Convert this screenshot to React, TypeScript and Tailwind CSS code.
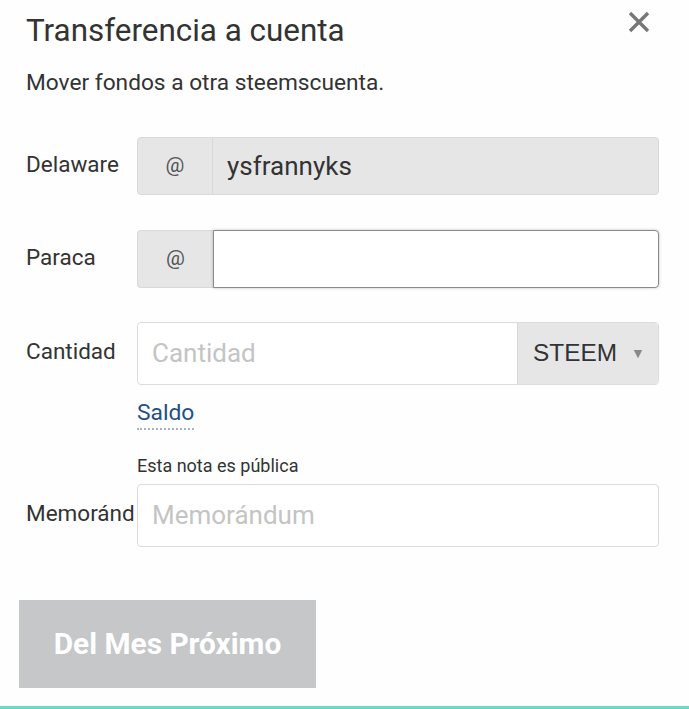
const font = { fontFamily: "Roboto, 'Noto Sans', sans-serif" };

function Row({
  label,
  children,
  className = "",
}: {
  label: string;
  children: React.ReactNode;
  className?: string;
}) {
  return (
    <div className={`flex items-center ${className}`}>
      <div className="-mt-[5px] mr-[2px] w-[109px] shrink-0 overflow-hidden whitespace-nowrap text-[22.5px] leading-[28px] text-[#333]">
        {label}
      </div>
      <div className="w-[522px]">{children}</div>
    </div>
  );
}

export default function App() {
  return (
    <div
      className="relative flex h-[709px] w-[689px] flex-col bg-[#fefefe] text-[#333]"
      style={font}
    >
      <div className="flex items-start justify-between pl-[26px] pr-[39px] pt-[12px]">
        <h1 className="text-[31.4px] leading-[38px] text-[#333]">Transferencia a cuenta</h1>
        <svg width="22" height="22" viewBox="0 0 22 22" className="-mt-[1px]">
          <path d="M2 2L20 20M20 2L2 20" stroke="#777" strokeWidth="3.4" strokeLinecap="butt" />
        </svg>
      </div>
      <p className="mt-[19px] pl-[26px] text-[22.7px] leading-[28px] text-[#333]">
        Mover fondos a otra steemscuenta.
      </p>

      <div className="mt-[40px] pl-[26px]">
        <Row label="Delaware">
          <div className="flex h-[58px] rounded-[4px] border border-[#d9d9d9] bg-[#e6e6e6]">
            <div className="flex w-[75px] items-center justify-center border-r border-[#d9d9d9] text-[21px] text-[#555]">
              @
            </div>
            <div className="flex flex-1 items-center pl-[14px] text-[26px] text-[#333]">
              ysfrannyks
            </div>
          </div>
        </Row>

        <Row label="Paraca" className="mt-[35px]">
          <div className="flex h-[58px]">
            <div className="flex w-[76px] items-center justify-center rounded-l-[4px] border border-r-0 border-[#d9d9d9] bg-[#e6e6e6] text-[21px] text-[#555]">
              @
            </div>
            <div className="flex-1 rounded-r-[4px] border border-[#8a8a8a] bg-white shadow-[0_0_3px_rgba(0,0,0,0.25)]" />
          </div>
        </Row>

        <Row label="Cantidad" className="mt-[34px]">
          <div className="flex h-[63px] rounded-[4px] border border-[#dcdcdc] bg-white">
            <div className="flex flex-1 items-center pl-[14px] text-[26px] text-[#c4c4c4]">
              Cantidad
            </div>
            <div
              className="flex w-[141px] items-center gap-[14px] rounded-r-[4px] border-l border-[#d6d6d6] bg-[#e6e6e6] pl-[15px] text-[24.4px] text-[#333]"
              style={{ fontFamily: "'Liberation Sans', Arial, sans-serif" }}
            >
              STEEM
              <span className="text-[14px] text-[#888]">▼</span>
            </div>
          </div>
        </Row>

        <div className="ml-[111px] mt-[15px]">
          <span className="border-b-[2px] border-dotted border-[#aab4c0] pb-[2px] text-[22.8px] leading-[26px] text-[#1f4f86]">
            Saldo
          </span>
        </div>

        <div className="ml-[111px] mt-[28px] text-[18px] leading-[22px] text-[#333]">
          Esta nota es pública
        </div>

        <Row label="Memorándum" className="mt-[7px]">
          <div className="flex h-[63px] items-center rounded-[4px] border border-[#dcdcdc] bg-white pl-[14px] text-[26px] text-[#c4c4c4]">
            Memorándum
          </div>
        </Row>
      </div>

      <div className="mt-[53px] pl-[19px]">
        <button className="flex h-[88px] w-[297px] items-center justify-center bg-[#c6c7c9] text-[29.8px] font-bold text-white">
          Del Mes Próximo
        </button>
      </div>

      <div className="mt-auto h-[3px] bg-[#6ad8c4]" />
    </div>
  );
}
